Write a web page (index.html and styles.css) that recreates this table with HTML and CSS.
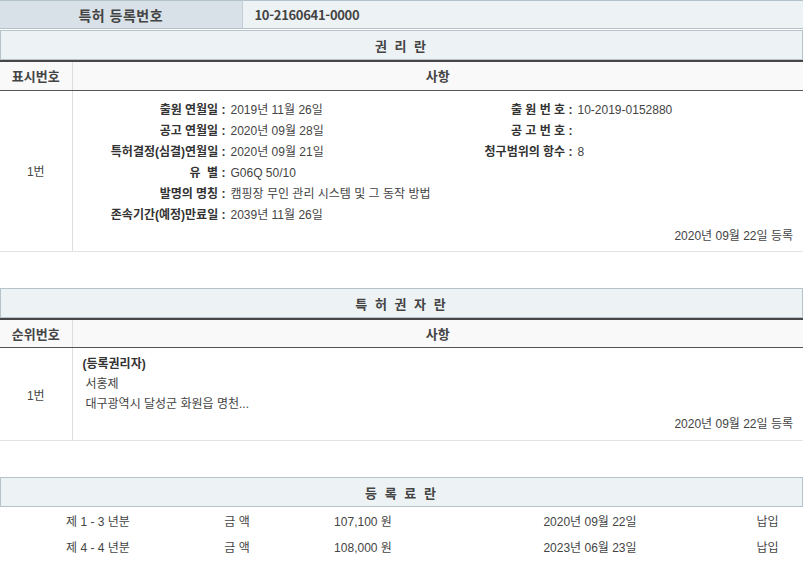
FILE: index.html
```html
<!DOCTYPE html>
<html lang="ko">
<head>
    <meta charset="UTF-8">
    <title>특허 등록원부</title>
    <link rel="stylesheet" href="styles.css">
</head>
<body>

    <!-- 등록번호 -->
    <table class="reg-no">
        <tr>
            <th>특허 등록번호</th>
            <td>10-2160641-0000</td>
        </tr>
    </table>

    <!-- 권리란 -->
    <div class="section first">
        <div class="section-title">권 리 란</div>
        <table class="grid">
            <tr>
                <th class="num">표시번호</th>
                <th>사항</th>
            </tr>
            <tr>
                <td class="num">1번</td>
                <td class="detail">
                    <div class="info">
                        <span class="label">출원 연월일 :</span>
                        <span class="value">2019년 11월 26일</span>
                        <span class="label">출 원 번 호 :</span>
                        <span class="value">10-2019-0152880</span>

                        <span class="label">공고 연월일 :</span>
                        <span class="value">2020년 09월 28일</span>
                        <span class="label">공 고 번 호 :</span>
                        <span class="value"></span>

                        <span class="label">특허결정(심결)연월일 :</span>
                        <span class="value">2020년 09월 21일</span>
                        <span class="label">청구범위의 항수 :</span>
                        <span class="value">8</span>

                        <span class="label">유 &nbsp;별 :</span>
                        <span class="value wide">G06Q 50/10</span>

                        <span class="label">발명의 명칭 :</span>
                        <span class="value wide">캠핑장 무인 관리 시스템 및 그 동작 방법</span>

                        <span class="label">존속기간(예정)만료일 :</span>
                        <span class="value wide">2039년 11월 26일</span>
                    </div>
                    <div class="reg-date">2020년 09월 22일 등록</div>
                </td>
            </tr>
        </table>
    </div>

    <!-- 특허권자란 -->
    <div class="section">
        <div class="section-title">특 허 권 자 란</div>
        <table class="grid">
            <tr>
                <th class="num">순위번호</th>
                <th>사항</th>
            </tr>
            <tr>
                <td class="num">1번</td>
                <td class="detail owner">
                    <div class="owner-type">(등록권리자)</div>
                    <div class="owner-line">서홍제</div>
                    <div class="owner-line">대구광역시 달성군 화원읍 명천...</div>
                    <div class="reg-date">2020년 09월 22일 등록</div>
                </td>
            </tr>
        </table>
    </div>

    <!-- 등록료란 -->
    <div class="section">
        <div class="section-title">등 록 료 란</div>
        <table class="fees">
            <tr>
                <td class="c1">제 1 - 3 년분</td>
                <td class="c2">금 액</td>
                <td class="c3">107,100 원</td>
                <td class="c4">2020년 09월 22일</td>
                <td class="c5">납입</td>
            </tr>
            <tr>
                <td class="c1">제 4 - 4 년분</td>
                <td class="c2">금 액</td>
                <td class="c3">108,000 원</td>
                <td class="c4">2023년 06월 23일</td>
                <td class="c5">납입</td>
            </tr>
        </table>
    </div>

</body>
</html>
```

FILE: styles.css
```css
* {
    margin: 0;
    padding: 0;
    box-sizing: border-box;
}

body {
    font-family: "Liberation Sans", "Noto Sans CJK KR", sans-serif;
    font-size: 12px;
    color: #444;
    background-color: #fff;
    width: 803px;
}

table {
    width: 100%;
    border-collapse: collapse;
}

/* 등록번호 */
.reg-no {
    border-top: 1px solid #b3c1cb;
    border-bottom: 1px solid #b3c1cb;
}

.reg-no th,
.reg-no td {
    height: 28px;
    font-family: "Noto Sans CJK KR", sans-serif;
    font-weight: bold;
    color: #444;
}

.reg-no th {
    width: 242px;
    font-size: 14px;
    letter-spacing: 0.5px;
    background-color: #d8e1e7;
    border-right: 1px solid #c3ced6;
}

.reg-no td {
    font-size: 13px;
    letter-spacing: -0.3px;
    background-color: #edf2f5;
    padding-left: 12px;
    text-align: left;
}

/* Section */
.section {
    margin-top: 36px;
}

.section.first {
    margin-top: 1px;
}

.section-title {
    height: 30px;
    line-height: 29px;
    background-color: #edf2f5;
    border: 1px solid #b7c3cb;
    text-align: center;
    font-family: "Noto Sans CJK KR", sans-serif;
    font-size: 13px;
    font-weight: bold;
    letter-spacing: 2px;
    color: #444;
}

.grid {
    border-top: 2px solid #474747;
}

.grid th {
    height: 29px;
    background-color: #f9f9f9;
    border-bottom: 1px solid #555;
    font-family: "Noto Sans CJK KR", sans-serif;
    font-size: 13px;
    font-weight: bold;
    color: #444;
}

.grid .num {
    width: 72px;
    border-right: 1px solid #dedede;
    text-align: center;
}

.grid td {
    border-bottom: 1px solid #e2e2e2;
    vertical-align: middle;
}

.detail {
    padding: 9px 10px 4px 0;
}

/* 권리란 정보 */
.info {
    display: grid;
    grid-template-columns: 153px 200px 137px 1fr;
    column-gap: 5px;
    line-height: 21px;
}

.info .label {
    text-align: right;
    font-weight: bold;
    color: #333;
    white-space: nowrap;
}

.info .value {
    white-space: nowrap;
}

.info .wide {
    grid-column: span 3;
}

.reg-date {
    text-align: right;
    line-height: 21px;
}

/* 특허권자란 */
.owner {
    padding: 6px 10px 6px 10px;
    line-height: 20px;
}

.owner-type {
    font-weight: bold;
    color: #333;
}

.owner-line {
    padding-left: 3px;
}

.owner .reg-date {
    line-height: 20px;
}

/* 등록료란 */
.fees td {
    height: 26px;
    text-align: center;
}

.fees .c1 { width: 196px; }
.fees .c2 { width: 82px; }
.fees .c3 { width: 170px; }
.fees .c4 { width: 284px; }
.fees .c5 { width: 71px; }
```
